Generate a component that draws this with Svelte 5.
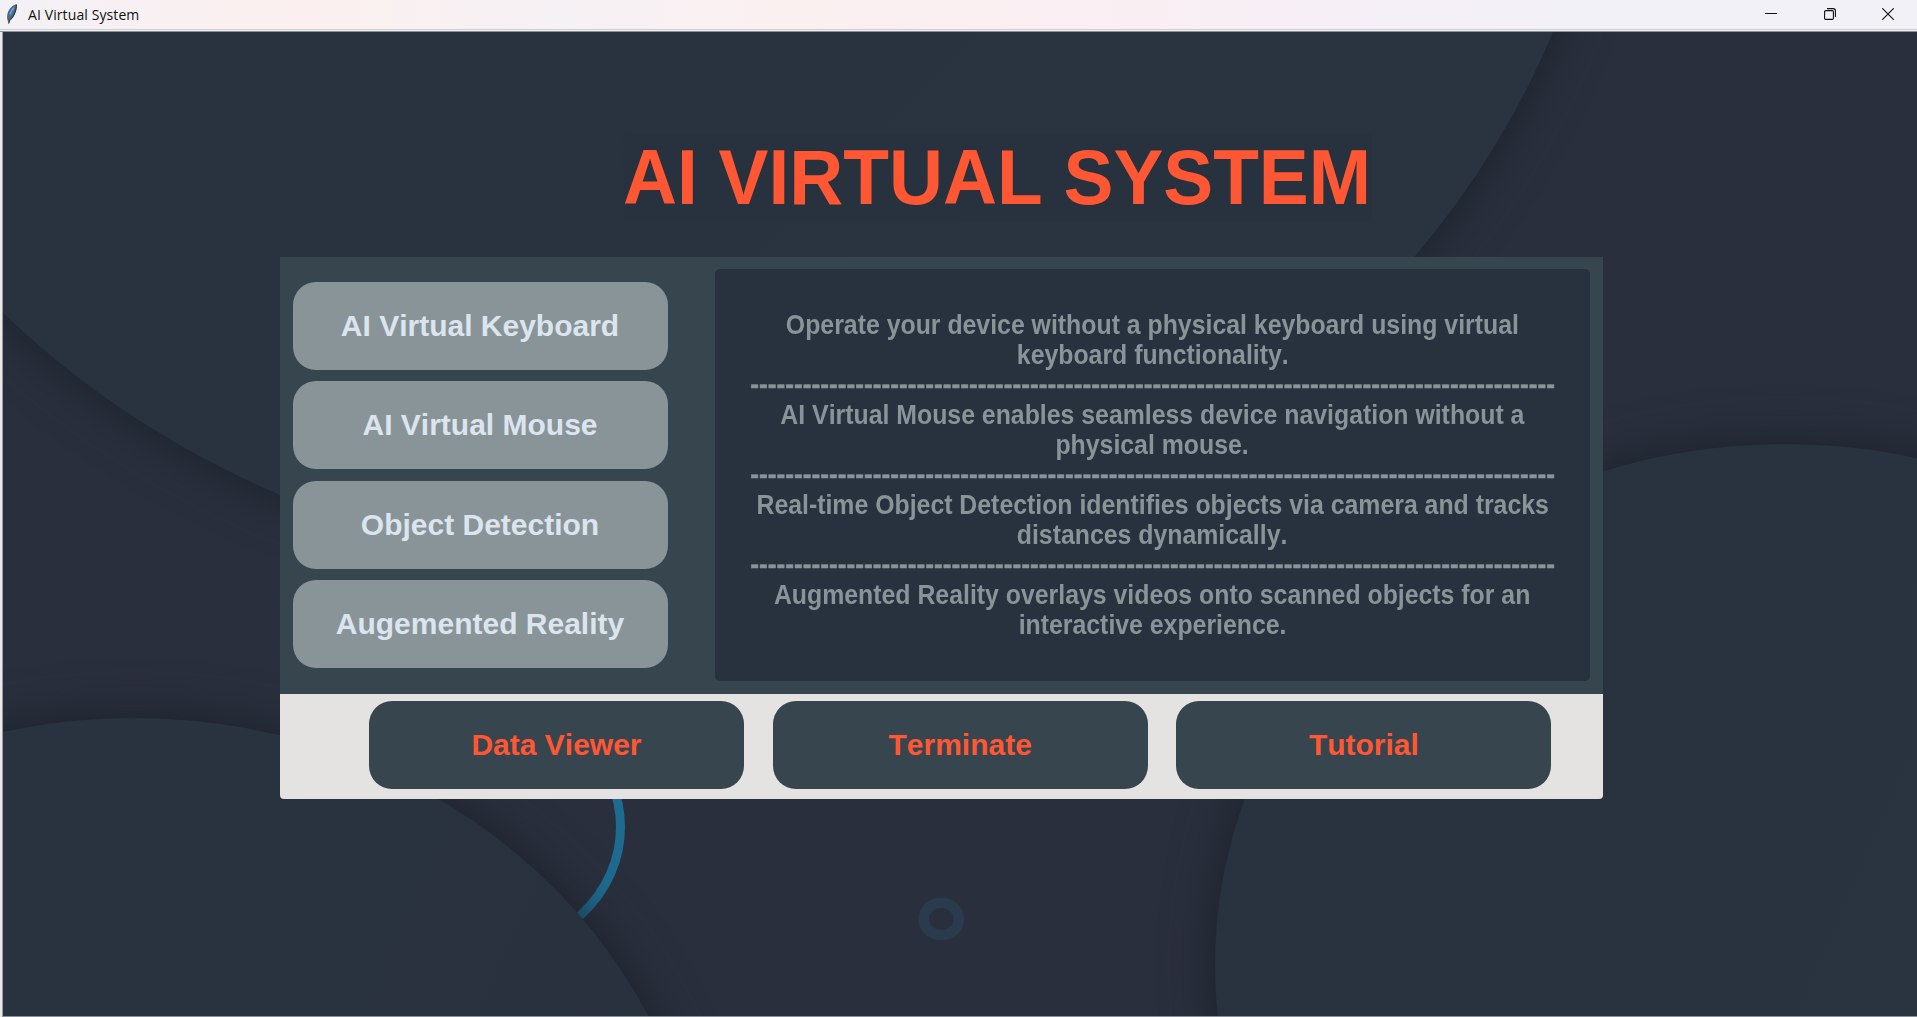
<script>
  const rule = '-'.repeat(92);
  const modes = ['AI Virtual Keyboard', 'AI Virtual Mouse', 'Object Detection', 'Augemented Reality'];
  const actions = ['Data Viewer', 'Terminate', 'Tutorial'];
  const lines = [
    'Operate your device without a physical keyboard using virtual',
    'keyboard functionality.',
    rule,
    'AI Virtual Mouse enables seamless device navigation without a',
    'physical mouse.',
    rule,
    'Real-time Object Detection identifies objects via camera and tracks',
    'distances dynamically.',
    rule,
    'Augmented Reality overlays videos onto scanned objects for an',
    'interactive experience.'
  ];
</script>

<div class="window">
  <header class="titlebar">
    <svg class="feather" width="14" height="22" viewBox="0 0 14 22">
      <path d="M11.5 1.2C8 1.8 4 5.5 2.6 10.2C1.8 13 2 15.5 2.6 17.2L3.6 20.6L4.8 17.8C7.6 16 10 12 11 8C11.7 5 12 2.8 11.5 1.2Z" fill="#59626c" />
      <path d="M10.4 2.8C7.5 3.8 4.6 8 3.7 12.6L3.6 15.6C6.5 13.5 8.2 10.5 9 7.5Z" fill="#3f78c0" />
      <path d="M11.4 1.6C11.8 6 9.5 13 4.6 17.6L3.7 20.6" fill="none" stroke="#2a2f36" stroke-width="1" />
      <path d="M9 4.6C7.3 6.2 5.6 8.8 4.8 11.4" fill="none" stroke="#7fb4ea" stroke-width="1.1" />
    </svg>
    <span class="caption">AI Virtual System</span>
    <div class="controls">
      <svg width="12" height="12" viewBox="0 0 12 12"><path d="M0 5.5H12" stroke="#111" /></svg>
      <svg width="12" height="12" viewBox="0 0 12 12" fill="none" stroke="#111" stroke-width="1.1">
        <rect x="0.6" y="2.6" width="8.8" height="8.8" rx="1.2" />
        <path d="M3 0.6H9.2Q11.4 0.6 11.4 2.8V9" />
      </svg>
      <svg width="12" height="12" viewBox="0 0 12 12"><path d="M0.3 0.3L11.7 11.7M11.7 0.3L0.3 11.7" stroke="#111" stroke-width="1.1" /></svg>
    </div>
  </header>

  <main class="stage">
    <svg class="backdrop" viewBox="3 32 1914 984" preserveAspectRatio="none">
      <defs>
        <linearGradient id="disc" x1="0" y1="0" x2="1" y2="0.4">
          <stop offset="0" stop-color="#28323e" />
          <stop offset="1" stop-color="#2a3441" />
        </linearGradient>
        <linearGradient id="disc2" x1="0" y1="0" x2="1" y2="0.4">
          <stop offset="0" stop-color="#29333f" />
          <stop offset="0.5" stop-color="#29333f" />
          <stop offset="1" stop-color="#28303d" />
        </linearGradient>
        <filter id="shade" x="-20%" y="-20%" width="140%" height="140%" color-interpolation-filters="sRGB">
          <feDropShadow dx="0" dy="0" stdDeviation="25" flood-color="#161e26" flood-opacity="0.85" />
        </filter>
      </defs>
      <rect x="3" y="32" width="1914" height="984" fill="#2a2f3d" />
      <path
        d="M-120 -120H1600Q1575 -40 1553 32A945 871 0 0 1 1415 256Q900 700 280 495A929 856 0 0 1 3 313Q-60 230 -120 100Z"
        fill="url(#disc)"
        filter="url(#shade)"
      />
      <ellipse cx="1785" cy="965" rx="570" ry="521" fill="url(#disc)" filter="url(#shade)" />
      <ellipse cx="485" cy="827" rx="135.5" ry="124.5" fill="none" stroke="#1e6b90" stroke-width="9" />
      <ellipse cx="134" cy="1242" rx="570" ry="524" fill="url(#disc2)" filter="url(#shade)" />
      <ellipse cx="941.3" cy="919" rx="17.6" ry="16.2" fill="none" stroke="#2a3b4d" stroke-width="10.5" />
    </svg>

    <h1><span>AI VIRTUAL SYSTEM</span></h1>

    <section class="panel">
      <div class="upper">
        <nav class="modes">
          {#each modes as mode}
            <button class="mode">{mode}</button>
          {/each}
        </nav>
        <div class="card">
          {#each lines as line}
            <p class:rule={line === rule}>{line}</p>
          {/each}
        </div>
      </div>
      <div class="lower">
        {#each actions as action}
          <button class="action">{action}</button>
        {/each}
      </div>
    </section>
  </main>
</div>

<style>
  :global(body) {
    margin: 0;
    overflow: hidden;
  }
  .window {
    width: 1917px;
    height: 1017px;
    display: flex;
    flex-direction: column;
    box-sizing: border-box;
    background: #e9e9ea;
    font-family: 'Liberation Sans', Arial, sans-serif;
  }
  .titlebar {
    height: 32px;
    box-sizing: border-box;
    display: flex;
    align-items: flex-start;
    padding: 3px 23px 0 5px;
    background: linear-gradient(to right, #f2f1f6 0, #f8f0f2 140px, #fbf0ef 300px, #f6f1f4 560px, #fbf0f0 800px, #f9eff3 1150px, #f5eff7 1400px, #f2f1f8 1600px);
    box-shadow: inset 0 -1px #8b9094, inset 0 -2px #eeeeee, inset 0 -3px #cfcfd2;
  }
  .caption {
    margin: 2px 0 0 9px;
    font: 14px/20px 'Open Sans', 'Noto Sans', sans-serif;
    letter-spacing: 0.1px;
    color: #111;
  }
  .controls {
    margin: 5px 0 0 auto;
    display: flex;
    gap: 46.5px;
  }
  .stage {
    position: relative;
    flex: 1;
    margin-left: 2px;
    border-left: 1px solid #9a9ea2;
    border-bottom: 1px solid #8b9094;
    overflow: hidden;
    display: flex;
    flex-direction: column;
    align-items: flex-start;
  }
  .backdrop {
    position: absolute;
    inset: 0;
    width: 100%;
    height: 100%;
  }
  h1 {
    position: relative;
    margin: 102px 0 0 620px;
    width: 749px;
    height: 87px;
    background: #28323e;
    font-size: 78px;
    line-height: 87px;
    color: #ff5733;
    white-space: nowrap;
  }
  h1 span {
    display: inline-block;
    transform-origin: left;
    transform: scaleX(0.959);
    font-kerning: none;
  }
  .panel {
    position: relative;
    margin: 35.5px 0 0 277px;
    width: 1323px;
  }
  .upper {
    height: 437px;
    box-sizing: border-box;
    display: flex;
    justify-content: space-between;
    padding: 12px 13px 13px 12.5px;
    background: #37454f;
  }
  .modes {
    display: flex;
    flex-direction: column;
    gap: 11.3px;
    padding-top: 13.5px;
  }
  button {
    width: 375px;
    height: 88px;
    padding: 0;
    border: 0;
    border-radius: 23px;
    font: bold 30px 'Liberation Sans', Arial, sans-serif;
    font-kerning: none;
  }
  .mode {
    background: #899499;
    color: #dce4ee;
  }
  .card {
    width: 875px;
    display: flex;
    flex-direction: column;
    justify-content: center;
    align-items: center;
    background: #28323e;
    border-radius: 5px;
  }
  p {
    margin: 0;
    font-size: 27px;
    font-weight: bold;
    line-height: 30px;
    font-kerning: none;
    color: #899499;
    white-space: nowrap;
    transform: scaleX(0.92);
  }
  .rule {
    transform: scaleX(0.973);
    -webkit-text-stroke: 0.5px #899499;
  }
  .lower {
    height: 105.5px;
    box-sizing: border-box;
    display: flex;
    gap: 28.7px;
    padding: 7px 0 0 89px;
    background: #e5e3e1;
    border-radius: 0 0 4px 4px;
  }
  .action {
    background: #37454f;
    color: #ff5733;
  }
</style>
